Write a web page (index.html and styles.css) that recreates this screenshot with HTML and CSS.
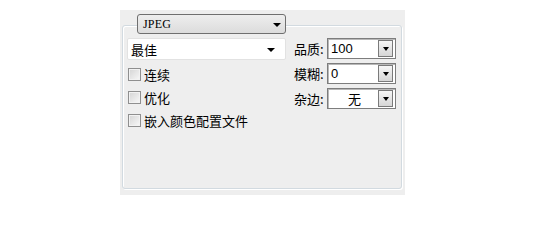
FILE: index.html
```html
<!DOCTYPE html>
<html lang="zh">
<head>
<meta charset="utf-8">
<link rel="stylesheet" href="styles.css">
</head>
<body>
<div class="panel">
  <div class="group">
    <div class="format-select"><span>JPEG</span><i class="tri"></i></div>
    <div class="left">
      <div class="preset"><span>最佳</span><i class="tri"></i></div>
      <label class="check"><span class="box"></span>连续</label>
      <label class="check"><span class="box"></span>优化</label>
      <label class="check"><span class="box"></span>嵌入颜色配置文件</label>
    </div>
    <div class="right">
      <div class="field"><span class="lbl">品质:</span><div class="combo"><span class="val">100</span><span class="btn"><i class="tri"></i></span></div></div>
      <div class="field"><span class="lbl">模糊:</span><div class="combo"><span class="val">0</span><span class="btn"><i class="tri"></i></span></div></div>
      <div class="field"><span class="lbl">杂边:</span><div class="combo"><span class="val center">无</span><span class="btn"><i class="tri"></i></span></div></div>
    </div>
  </div>
</div>
</body>
</html>
```

FILE: styles.css
```css
html, body {
  margin: 0;
  padding: 0;
  background: #ffffff;
  font-family: "Noto Sans CJK SC", "Noto Sans", sans-serif;
  font-size: 13px;
  color: #000;
}
.panel {
  margin: 10px 0 0 120px;
  width: 285px;
  height: 185px;
  background: #eeeeee;
  padding: 15px 0 0 2px;
  box-sizing: border-box;
}
.group {
  position: relative;
  width: 280px;
  height: 164px;
  box-sizing: border-box;
  border: 1px solid #d2dae0;
  border-radius: 3px;
  box-shadow: inset 1px 1px 0 #ffffff, 1px 1px 0 #ffffff;
  display: flex;
  padding: 12px 0 0 4px;
}
.tri {
  display: inline-block;
  width: 0;
  height: 0;
  border-left: 4px solid transparent;
  border-right: 4px solid transparent;
  border-top: 4px solid #000;
}
.format-select {
  position: absolute;
  left: 14px;
  top: -12px;
  width: 149px;
  height: 20px;
  box-sizing: border-box;
  border: 1px solid #6f6f6f;
  border-radius: 3px;
  background: linear-gradient(#eeeeee, #dcdcdc);
  display: flex;
  align-items: center;
  justify-content: space-between;
  padding: 0 4px 0 5px;
  font-family: "Liberation Serif", serif;
  font-size: 12px;
  font-weight: normal;
  letter-spacing: 0.2px;
}
.format-select .tri { margin-top: 2px; }
.left {
  width: 159px;
  display: flex;
  flex-direction: column;
}
.preset {
  height: 22px;
  box-sizing: border-box;
  background: #fff;
  border: 1px solid #e2e2e2;
  border-radius: 2px;
  display: flex;
  align-items: center;
  justify-content: space-between;
  padding: 0 10px 0 3px;
  margin-bottom: 3px;
}
.preset .tri { margin-top: 2px; }
.check {
  height: 23px;
  display: flex;
  align-items: center;
  gap: 3px;
  margin-left: 1px;
}
.box {
  width: 11px;
  height: 11px;
  border: 1px solid #8f8f8f;
  background: linear-gradient(135deg, #d4d4d4, #f8f8f8);
  box-shadow: inset 0 0 0 1px #f2f2f2;
}
.right {
  margin-left: 8px;
  display: flex;
  flex-direction: column;
  gap: 4px;
}
.field {
  display: flex;
  align-items: center;
  height: 21px;
}
.lbl {
  width: 33px;
}
.combo {
  width: 69px;
  height: 21px;
  box-sizing: border-box;
  background: #fff;
  border: 1px solid #7d7d7d;
  box-shadow: inset 1px 1px 0 #b8b8b8;
  display: flex;
  align-items: center;
  padding: 0 2px 0 3px;
}
.val {
  flex: 1;
  font-family: "Liberation Sans", sans-serif;
  font-size: 13px;
}
.val.center {
  text-align: center;
  font-family: "Noto Sans CJK SC", sans-serif;
}
.btn {
  width: 15px;
  height: 17px;
  box-sizing: border-box;
  border: 1px solid #7a7a7a;
  background: linear-gradient(#f6f6f6, #d6d6d6);
  display: flex;
  align-items: center;
  justify-content: center;
}
.btn .tri {
  border-left-width: 3.5px;
  border-right-width: 3.5px;
  border-top-width: 4px;
}
```
